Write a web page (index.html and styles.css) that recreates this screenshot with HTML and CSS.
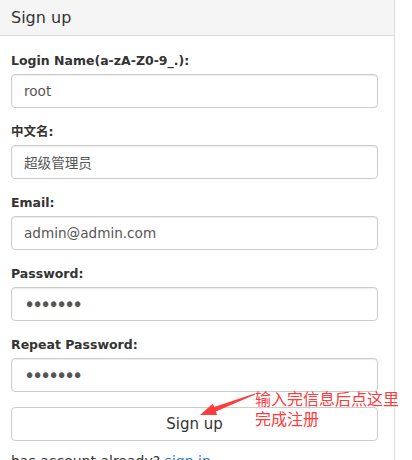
FILE: index.html
```html
<!DOCTYPE html>
<html lang="zh-CN">
<head>
  <meta charset="UTF-8">
  <meta name="viewport" content="width=device-width, initial-scale=1.0">
  <title>Sign up</title>
  <link rel="stylesheet" href="styles.css">
</head>
<body>
  <div class="panel">
    <div class="panel-heading">Sign up</div>
    <div class="panel-body">
      <form class="signup-form">
        <div class="form-group">
          <label for="login">Login Name(a-zA-Z0-9_.):</label>
          <input id="login" class="form-control" type="text" value="root">
        </div>
        <div class="form-group">
          <label for="cname">中文名:</label>
          <input id="cname" class="form-control" type="text" value="超级管理员">
        </div>
        <div class="form-group">
          <label for="email">Email:</label>
          <input id="email" class="form-control" type="text" value="admin@admin.com">
        </div>
        <div class="form-group">
          <label for="pwd">Password:</label>
          <input id="pwd" class="form-control pwd" type="password" value="1234567">
        </div>
        <div class="form-group">
          <label for="pwd2">Repeat Password:</label>
          <input id="pwd2" class="form-control pwd" type="password" value="1234567">
        </div>
        <div class="submit-row">
          <button type="button" class="btn">Sign up</button>
          <svg class="note-arrow" width="60" height="28" viewBox="0 0 60 28">
            <path d="M2 24 L14.9 12.7 L16.1 16 L56.8 2.5 L57.2 3.5 L17.9 20.6 L19.1 23.9 Z" fill="#ff3b3b"/>
          </svg>
          <p class="note-text">输入完信息后点这里<br>完成注册</p>
        </div>
      </form>
      <p class="signin">has account already? <a href="#">sign in</a></p>
    </div>
  </div>
</body>
</html>
```

FILE: styles.css
```css
body {
  margin: 0;
  font-family: "DejaVu Sans", "Noto Sans CJK SC", sans-serif;
  font-size: 14px;
  color: #333;
  background: #fff;
}

.panel {
  width: 394px;
  border-right: 1px solid #ddd;
  min-height: 460px;
}

.panel-heading {
  background-color: #f5f5f5;
  border-bottom: 1px solid #ddd;
  height: 35px;
  line-height: 35px;
  padding-left: 11px;
  font-size: 16px;
  color: #333;
}

.panel-body {
  padding: 16px 16px 0 11px;
}

.form-group {
  margin-bottom: 15px;
}

label {
  display: block;
  font-weight: bold;
  font-size: 12.5px;
  line-height: 17px;
  margin-bottom: 5px;
  color: #333;
}

.form-control {
  display: block;
  box-sizing: border-box;
  width: 100%;
  height: 34px;
  padding: 6px 12px;
  font-family: "DejaVu Sans", "Noto Sans CJK SC", sans-serif;
  font-size: 13.6px;
  color: #555;
  background: #fff;
  border: 1px solid #ccc;
  border-radius: 4px;
  box-shadow: inset 0 1px 1px rgba(0,0,0,0.075);
}

.form-control.pwd {
  font-size: 19px;
  letter-spacing: -3.2px;
  color: #555;
}

.submit-row {
  position: relative;
}

.btn {
  display: block;
  width: 100%;
  height: 34px;
  font-family: "DejaVu Sans", sans-serif;
  font-size: 15px;
  color: #333;
  background: #fff;
  border: 1px solid #ccc;
  border-radius: 4px;
}

.note-arrow {
  position: absolute;
  left: 187px;
  top: -16px;
}

.note-text {
  position: absolute;
  left: 244px;
  top: -19px;
  margin: 0;
  font-family: "Noto Sans CJK SC", sans-serif;
  font-size: 16px;
  line-height: 20px;
  color: #ff3b3b;
  white-space: nowrap;
}

.signin {
  margin: 10px 0 0;
  font-size: 14px;
  line-height: 20px;
}

.signin a {
  color: #337ab7;
  text-decoration: none;
}
```
